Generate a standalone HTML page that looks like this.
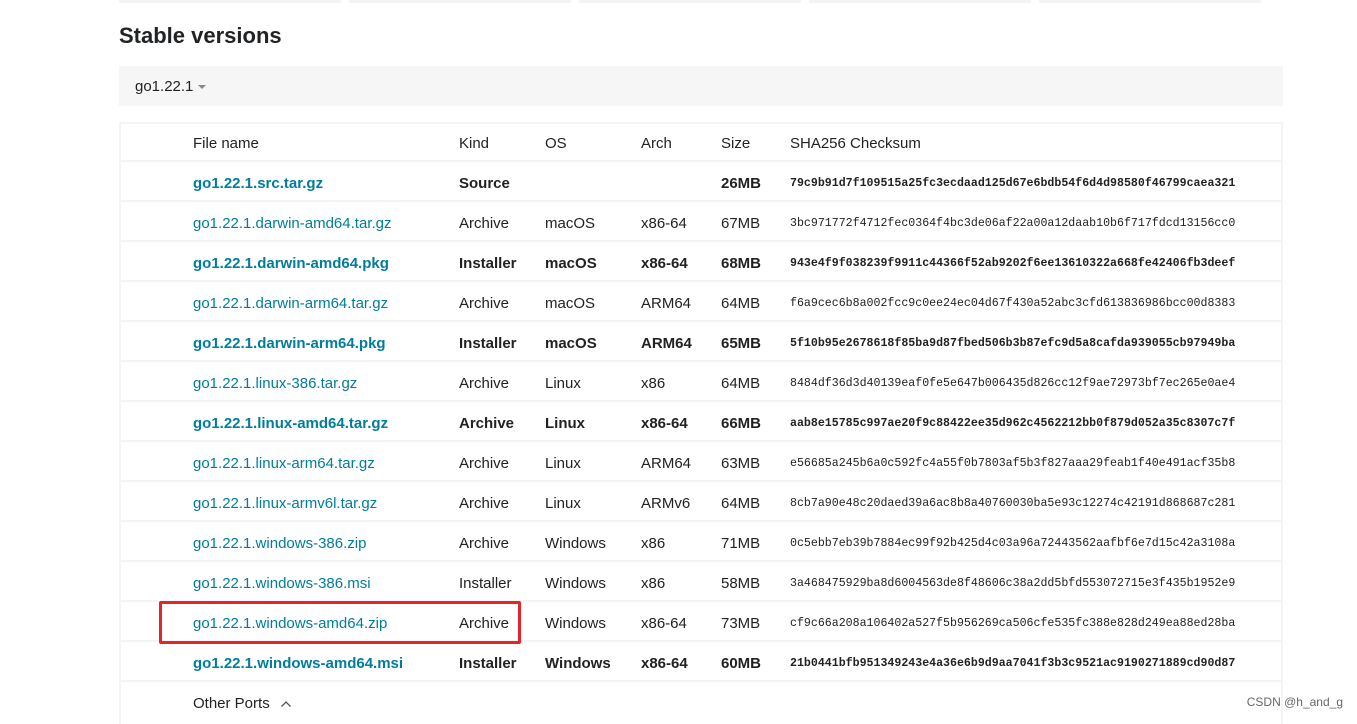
<!DOCTYPE html>
<html><head><meta charset="utf-8"><style>
body{margin:0;width:1357px;height:719px;overflow:hidden;background:#fff;font-family:"Liberation Sans",sans-serif;color:#202224;position:relative}
.tb{position:absolute;top:0;height:3px;background:#f3f3f3}
h2{position:absolute;left:119px;top:23px;margin:0;font-size:22px;font-weight:bold;color:#202224}
.sel{position:absolute;left:119px;top:66px;width:1164px;height:40px;background:#f6f6f6}
.sel span{position:absolute;left:16px;top:12px;font-size:15px}
.sel i{position:absolute;left:79px;top:19px;border:4px solid transparent;border-top:4px solid #888;border-bottom:0}
.tbl{position:absolute;left:119px;top:122px;width:1160px;height:600px;border:2px solid #f4f4f4;border-bottom:0}
.r{position:absolute;left:0;width:1160px;height:40px;border-bottom:2px solid #f4f4f4;box-sizing:border-box}
.c{position:absolute;top:13px;font-size:15px;white-space:nowrap}
.a{color:#007d9c}
.b{font-weight:bold}
.h{font-family:"Liberation Mono",monospace;font-size:11.6px;top:15px}
.red{position:absolute;left:159px;top:601px;width:356px;height:37px;border:3px solid #e3242b;border-radius:2px}
.wm{position:absolute;right:14px;top:695px;font-size:12px;color:#666}
</style></head><body>
<div class="tb" style="left:119px;width:222px"></div>
<div class="tb" style="left:349px;width:222px"></div>
<div class="tb" style="left:579px;width:222px"></div>
<div class="tb" style="left:809px;width:222px"></div>
<div class="tb" style="left:1039px;width:222px"></div>
<h2>Stable versions</h2>
<div class="sel"><span>go1.22.1</span><i></i></div>
<div class="tbl" id="t"></div>
<div class="red"></div>
<div class="wm">CSDN @h_and_g</div>
<script>
var rows=[
["File name","Kind","OS","Arch","Size","SHA256 Checksum","H"],
["go1.22.1.src.tar.gz","Source","","","26MB","79c9b91d7f109515a25fc3ecdaad125d67e6bdb54f6d4d98580f46799caea321",1],
["go1.22.1.darwin-amd64.tar.gz","Archive","macOS","x86-64","67MB","3bc971772f4712fec0364f4bc3de06af22a00a12daab10b6f717fdcd13156cc0",0],
["go1.22.1.darwin-amd64.pkg","Installer","macOS","x86-64","68MB","943e4f9f038239f9911c44366f52ab9202f6ee13610322a668fe42406fb3deef",1],
["go1.22.1.darwin-arm64.tar.gz","Archive","macOS","ARM64","64MB","f6a9cec6b8a002fcc9c0ee24ec04d67f430a52abc3cfd613836986bcc00d8383",0],
["go1.22.1.darwin-arm64.pkg","Installer","macOS","ARM64","65MB","5f10b95e2678618f85ba9d87fbed506b3b87efc9d5a8cafda939055cb97949ba",1],
["go1.22.1.linux-386.tar.gz","Archive","Linux","x86","64MB","8484df36d3d40139eaf0fe5e647b006435d826cc12f9ae72973bf7ec265e0ae4",0],
["go1.22.1.linux-amd64.tar.gz","Archive","Linux","x86-64","66MB","aab8e15785c997ae20f9c88422ee35d962c4562212bb0f879d052a35c8307c7f",1],
["go1.22.1.linux-arm64.tar.gz","Archive","Linux","ARM64","63MB","e56685a245b6a0c592fc4a55f0b7803af5b3f827aaa29feab1f40e491acf35b8",0],
["go1.22.1.linux-armv6l.tar.gz","Archive","Linux","ARMv6","64MB","8cb7a90e48c20daed39a6ac8b8a40760030ba5e93c12274c42191d868687c281",0],
["go1.22.1.windows-386.zip","Archive","Windows","x86","71MB","0c5ebb7eb39b7884ec99f92b425d4c03a96a72443562aafbf6e7d15c42a3108a",0],
["go1.22.1.windows-386.msi","Installer","Windows","x86","58MB","3a468475929ba8d6004563de8f48606c38a2dd5bfd553072715e3f435b1952e9",0],
["go1.22.1.windows-amd64.zip","Archive","Windows","x86-64","73MB","cf9c66a208a106402a527f5b956269ca506cfe535fc388e828d249ea88ed28ba",0],
["go1.22.1.windows-amd64.msi","Installer","Windows","x86-64","60MB","21b0441bfb951349243e4a36e6b9d9aa7041f3b3c9521ac9190271889cd90d87",1]
];
var xs=[72,338,424,520,600,669],h="";
rows.forEach(function(r,i){
 var cls=r[6]==="H"?"":(r[6]?" b":"");
 h+='<div class="r" style="top:'+(i*40-2)+'px">';
 for(var j=0;j<6;j++){
  var k="c"+cls+(j==0&&r[6]!=="H"?" a":"")+(j==5&&r[6]!=="H"?" h":"");
  h+='<div class="'+k+'" style="left:'+xs[j]+'px">'+r[j]+'</div>';
 }
 h+='</div>';
});
h+='<div class="c" style="left:72px;top:'+(14*40-2+13)+'px">Other Ports <svg width="12" height="8" style="margin-left:6px" viewBox="0 0 12 8"><path d="M1.5 6.5L6 2L10.5 6.5" fill="none" stroke="#555" stroke-width="1.3"/></svg></div>';
document.getElementById("t").innerHTML=h;
</script>
</body></html>
